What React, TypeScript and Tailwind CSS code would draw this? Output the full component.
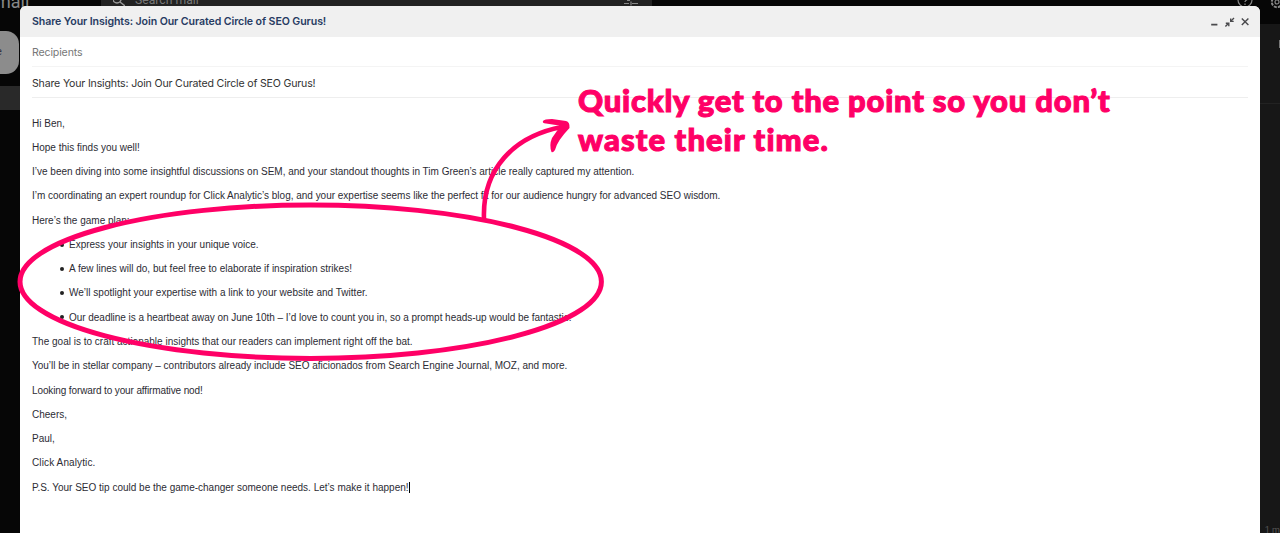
import type { ReactNode } from "react";

function Line({ children, className }: { children: ReactNode; className?: string }) {
  return (
    <p className="h-[24.28px] whitespace-nowrap">
      <span className={className}>{children}</span>
    </p>
  );
}

function Item({ children, className }: { children: ReactNode; className?: string }) {
  return (
    <li className="flex h-[24.28px] items-center whitespace-nowrap">
      <span className="mb-px mr-[5px] size-1 rounded-full bg-[#222]" />
      <span className={className}>{children}</span>
    </li>
  );
}

function Backdrop() {
  return (
    <div className="absolute inset-0 flex bg-[#060606] font-['Roboto',sans-serif]">
      <div className="w-5">
        <div className="-ml-[5px] h-[31px] text-[18px] leading-[4px] text-[#888]">mail</div>
        <div className="flex h-[43px] w-[19px] items-center rounded-r-[13px] bg-[#8c8c8c] text-[11px] text-[#334]">
          <span className="-ml-[4px]">e</span>
        </div>
        <div className="mt-3 h-6 bg-[#292929]" />
      </div>
      <div className="ml-[81px] flex h-5 w-[551px] items-start bg-[#222] text-[#777]">
        <svg className="ml-3 size-3" viewBox="0 0 12 12" fill="none" stroke="#999" strokeWidth="1.4">
          <circle cx="4" cy="-1" r="4" />
          <path d="M7 2l5 4" />
        </svg>
        <span className="ml-[10px] text-[12.2px] leading-[1px]">Search mail</span>
        <svg className="ml-auto mr-[13px] h-2 w-4" viewBox="0 0 16 8" stroke="#888" strokeWidth="1.2" fill="none">
          <path d="M1 3.5h5M9 3.5h6M8 1.5v4M4 .5h3" />
        </svg>
      </div>
      <svg className="ml-auto h-6 w-[43px]" viewBox="0 0 43 24" fill="none" stroke="#888" strokeWidth="1.2">
        <circle cx="8" cy="0" r="7" />
        <path d="M6 -2c0-3 5-3 5 0c0 2-3 2-3 4M8 3.5v1.5" />
        <circle cx="40" cy="2" r="5.2" strokeWidth="2" strokeDasharray="3 1.1" />
        <circle cx="40" cy="2" r="2" />
      </svg>
      <div className="-ml-5 w-5">
        <div className="mt-6 flex h-[509px] flex-col items-end bg-[#171717]">
          <div className="mt-4 h-2 w-px bg-[#777]" />
          <div className="mt-[55px] h-px w-full bg-[#222]" />
          <div className="mt-auto whitespace-nowrap text-[9px] leading-[6px] text-[#555]">1 m</div>
        </div>
      </div>
    </div>
  );
}

function WindowControls() {
  return (
    <svg className="h-3 w-10" viewBox="0 0 40 12" fill="none" stroke="#4a4a4d" strokeWidth="1.4">
      <path d="M1.2 8.6h6.2" strokeWidth="1.7" />
      <path d="M15.4 10.6l3-3M24 2l-3 3" />
      <path d="M15.8 7.3h3v3M20.7 2.4v3h3" />
      <path d="M31.8 2.5l6.6 6.6M38.4 2.5l-6.6 6.6" />
    </svg>
  );
}

export default function App() {
  return (
    <div className="relative h-[533px] w-[1280px] overflow-hidden bg-black">
      <Backdrop />
      <div className="relative ml-5 mt-[6px] h-[527px] w-[1240px] overflow-hidden rounded-t-[6px] bg-white font-['Liberation_Sans',Arial,sans-serif] text-[#2c2c34]">
        <header className="flex h-[31px] items-center justify-between bg-[#f0f0f0] pl-3 pr-[10px] font-['Inter',sans-serif]">
          <span className="text-[10.6px] font-semibold tracking-[-0.085px] text-[#273b62]">Share Your Insights: Join Our Curated Circle of SEO Gurus!</span>
          <WindowControls />
        </header>
        <div className="mx-3 flex h-[30px] items-center border-b border-[#f4f4f4] pt-[2px] font-['Inter',sans-serif] text-[10.6px] tracking-[-0.15px] text-[#777]">Recipients</div>
        <div className="mx-3 flex h-[31px] items-center border-b border-[#eeeeee] pt-[3px] font-['Inter',sans-serif] text-[10.6px] tracking-[-0.18px] text-[#333]">Share Your Insights: Join Our Curated Circle of SEO Gurus!</div>
        <main className="px-3 pt-[13.6px] text-[10px] leading-[24.28px]">
          <Line>Hi Ben,</Line>
          <Line>Hope this finds you well!</Line>
          <Line>I’ve been diving into some insightful discussions on SEM, and your standout thoughts in Tim Green’s article really captured my attention.</Line>
          <Line className="tracking-[-0.012px]">I’m coordinating an expert roundup for Click Analytic’s blog, and your expertise seems like the perfect fit for our audience hungry for advanced SEO wisdom.</Line>
          <Line>Here’s the game plan:</Line>
          <ul className="pl-[28px]">
            <Item>Express your insights in your unique voice.</Item>
            <Item>A few lines will do, but feel free to elaborate if inspiration strikes!</Item>
            <Item className="tracking-[0.014px]">We’ll spotlight your expertise with a link to your website and Twitter.</Item>
            <Item className="tracking-[-0.035px]">Our deadline is a heartbeat away on June 10th – I’d love to count you in, so a prompt heads-up would be fantastic.</Item>
          </ul>
          <Line>The goal is to craft actionable insights that our readers can implement right off the bat.</Line>
          <Line className="tracking-[-0.01px]">You’ll be in stellar company – contributors already include SEO aficionados from Search Engine Journal, MOZ, and more.</Line>
          <Line className="tracking-[-0.12px]">Looking forward to your affirmative nod!</Line>
          <Line>Cheers,</Line>
          <Line>Paul,</Line>
          <Line className="tracking-[0.12px]">Click Analytic.</Line>
          <Line className="border-r border-black">P.S. Your SEO tip could be the game-changer someone needs. Let’s make it happen!</Line>
        </main>
      </div>
      <svg className="absolute inset-0" width="1280" height="533" viewBox="0 0 1280 533" fill="none" stroke="#ff0066">
        <ellipse cx="310.7" cy="281.7" rx="290.7" ry="76.7" strokeWidth="5" />
        <path d="M484 219C482 169 514 136 562 127" strokeWidth="4.6" />
        <path d="M543 121Q544 119 552 119L566 121Q570 122 569.5 128Q557 141 555 150Q553 153 551.5 152Q549 145 552 138L559 128L559 125.500L546 123.500Q542 123 543 121Z" fill="#ff0066" stroke="none" />
      </svg>
      <p className="absolute left-[578px] top-[81px] whitespace-nowrap font-['Lato',sans-serif] text-[31px] font-black leading-[39px] text-[#ff0066] [-webkit-text-stroke:1.1px_#ff0066]">
        <span className="tracking-[0.78px]">Quickly get to the point so you don’t</span>
        <br />
        <span className="tracking-[1.1px]">waste their time.</span>
      </p>
    </div>
  );
}
